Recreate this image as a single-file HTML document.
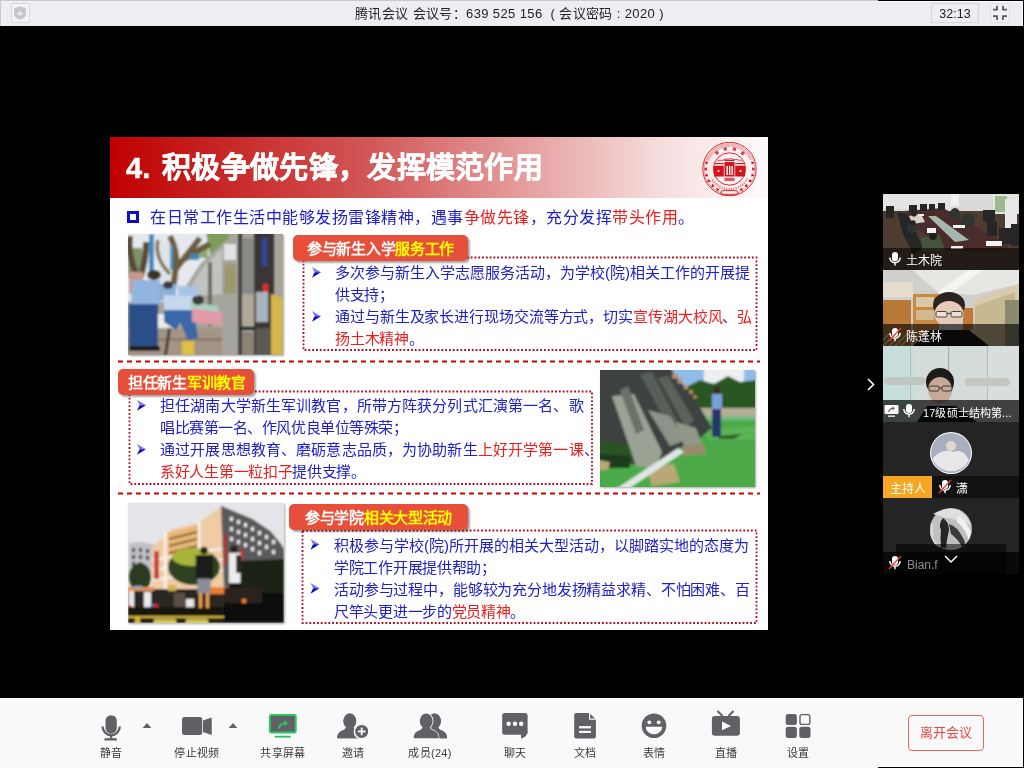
<!DOCTYPE html>
<html lang="zh-CN"><head><meta charset="utf-8">
<style>
*{margin:0;padding:0;box-sizing:border-box}
html,body{width:1024px;height:768px;overflow:hidden;background:#000}
body{font-family:"Liberation Sans",sans-serif;position:relative}
.a,.ln,.tool,.lbl{will-change:transform}
.a{position:absolute}
.tb{left:0;top:0;width:1024px;height:26px;background:#edeef2}
.ttl{left:0;top:1px;width:1024px;height:26px;line-height:26px;text-align:center;font-size:13px;letter-spacing:0.38px;color:#222}
.slide{left:110px;top:137px;width:658px;height:493px;background:#fff;overflow:hidden}
.hdr{left:0;top:0;width:658px;height:61px;background:linear-gradient(90deg,#c00000 0%,#d25858 40%,#e7a4a4 65%,#f6dede 84%,#fefafa 100%)}
.htxt{left:16px;top:11px;font-size:29px;font-weight:bold;-webkit-text-stroke:0.5px #fff;color:#fff;line-height:40px;white-space:nowrap}
.ln{position:absolute;white-space:nowrap;font-size:15px;line-height:22px;color:#2020cc}
.r{color:#f01c1c}
.lbl{position:absolute;background:#e84f3a;border-radius:5px;color:#fff;font-weight:bold;font-size:15px;letter-spacing:-0.3px;line-height:28px;white-space:nowrap;box-shadow:2px 2px 2px rgba(0,0,0,.35)}
.y{color:#ffff00}
.arr{position:absolute;font-size:13px;color:#0d0dc4}
.tool{position:absolute;top:0;font-size:11px;letter-spacing:0.3px;line-height:13px;color:#3a3a3a;text-align:center;white-space:nowrap}
</style></head><body>
<svg width="0" height="0" style="position:absolute"><defs><filter id="bl1" x="-5%" y="-5%" width="110%" height="110%"><feGaussianBlur stdDeviation="0.9"/></filter><filter id="bl2" x="-5%" y="-5%" width="110%" height="110%"><feGaussianBlur stdDeviation="1"/></filter></defs></svg>
<!-- title bar -->
<div class="a tb"></div>
<div class="a" style="left:0;top:0;width:878px;height:1px;background:#c9cacd"></div>
<div class="a" style="left:0;top:0;width:1px;height:26px;background:#c9cacd"></div>
<div class="a" style="left:878px;top:0;width:146px;height:1px;background:#000"></div>
<div class="a" style="left:878px;top:1px;width:145px;height:1px;background:#fff"></div>
<div class="a" style="left:1022px;top:1px;width:1px;height:25px;background:#fff"></div>
<div class="a" style="left:1023px;top:0;width:1px;height:26px;background:#000"></div>
<div class="a" style="left:11px;top:3px;width:19px;height:20px;border:1px solid #d9dadd;background:#f2f3f6;border-radius:1px"></div>
<svg class="a" style="left:11px;top:3px" width="19" height="20"><path d="M9,3.2 L14.9,5.3 L14.9,10.6 C14.9,13.9 12.4,15.8 9,16.6 C5.6,15.8 3.1,13.9 3.1,10.6 L3.1,5.3z" fill="#c6c7ca"/><rect x="6" y="9.9" width="6" height="1.5" fill="#eef0f2"/><rect x="8.25" y="8" width="1.5" height="5.2" fill="#eef0f2"/></svg>
<div class="a" style="left:931px;top:3px;width:48px;height:20px;border:1px solid #d6d7da;background:#eceef1;font-size:12.5px;line-height:20px;text-align:center;color:#222">32:13</div>
<div class="a" style="left:990px;top:3px;width:20px;height:20px;border:1px solid #dfe0e3;background:#eef0f3;border-radius:1px"></div>
<svg class="a" style="left:990px;top:0px" width="20" height="26" fill="none" stroke="#5a5c60" stroke-width="1.8"><path d="M7,5.8 V9.6 H3 M13,5.8 V9.6 H17 M3,16.2 H7 V20 M17,16.2 H13 V20"/></svg>
<div class="a ttl" style="text-align:left;left:355px;width:auto">腾讯会议 会议号：639 525 156 <span style="margin:0 4px 0 4px">(</span>会议密码<span style="margin:0 4px 0 4px">:</span>2020<span style="margin-left:4px">)</span></div>

<!-- slide -->
<div class="a slide">
  <div class="a hdr"></div>
  <div class="a htxt">4.<span style="margin-left:12px;letter-spacing:0.3px">积极争做先锋，发挥模范作用</span></div>
  <div class="a" style="left:17px;top:74px;width:12px;height:12px;border:3px solid #0c0cc8"></div>
  <div class="ln" style="left:40px;top:70px;font-size:16px;letter-spacing:0.5px">在日常工作生活中能够发扬雷锋精神，遇事<span class="r">争做先锋</span>，充分发挥<span class="r">带头作用</span>。</div>
  <svg class="a" style="left:0;top:0" width="658" height="493">
    <g stroke="#b0081c" stroke-width="1.8" stroke-dasharray="1.8 2" fill="none">
      <rect x="193.5" y="120.5" width="453" height="92.5"/>
      <rect x="19.5" y="254.5" width="462.5" height="92.5"/>
      <rect x="192.5" y="393.5" width="454" height="92.5"/>
    </g>
    <g stroke="#d00000" stroke-width="2" stroke-dasharray="5 4" fill="none">
      <line x1="8" y1="224.5" x2="650" y2="224.5"/>
      <line x1="8" y1="356.5" x2="650" y2="356.5"/>
    </g>
  </svg>
  <!-- arrows -->
  <svg class="a" style="left:0;top:0" width="658" height="493">
   <defs><g id="ar"><path d="M0,0 L9,5.2 L2.6,5.2z" fill="#7a7ae0"/><path d="M2.6,5.2 L9,5.2 L0,10.8z" fill="#0a0ac0"/></g></defs>
   <use href="#ar" x="202" y="130"/><use href="#ar" x="202" y="174"/>
   <use href="#ar" x="27" y="263"/><use href="#ar" x="27" y="307"/>
   <use href="#ar" x="200.5" y="402"/><use href="#ar" x="200.5" y="446"/>
  </svg>
  <!-- logo -->
  <svg class="a" style="left:592px;top:5px" width="56" height="56" viewBox="0 0 56 56">
   <g fill="none" stroke="#d2141e">
    <circle cx="27.5" cy="27" r="26.7" stroke-width="0.9"/>
    <circle cx="27.5" cy="27" r="25.2" stroke-width="0.5" opacity=".7"/>
    <path d="M5.90,18.27 A23.3,23.3 0 0 1 49.10,18.27" stroke-width="2.6" stroke-dasharray="0.6 0.6" opacity="0.5"/>
    <circle cx="27.5" cy="27" r="16.2" stroke-width="0.9"/>
    <path d="M45.34,36.48 A20.2,20.2 0 0 1 9.66,36.48" stroke-width="2.2" stroke-dasharray="1.1 1.3" opacity="0.6"/>
    <path d="M15.5,19 Q18,17.5 20.5,18.5 Q23,16.5 26,17.2 Q29,15.8 31.5,17.5 Q34,16.8 36.5,18.2 Q38.5,17.6 40,19" stroke-width="0.8"/>
   </g>
   <g fill="#d2141e">
    <polygon points="2.4,20.3 5.1,22.8 6.0,19.4"/><polygon points="52.6,20.3 49.0,19.4 49.9,22.8"/><polygon points="1.5,27.0 4.8,28.8 4.8,25.2"/><polygon points="53.5,27.0 50.2,25.2 50.2,28.8"/><polygon points="2.4,33.7 6.0,34.6 5.1,31.2"/><polygon points="52.6,33.7 49.9,31.2 49.0,34.6"/><polygon points="5.0,40.0 8.7,39.9 6.9,36.8"/><polygon points="50.0,40.0 48.1,36.8 46.3,39.9"/><polygon points="9.1,45.4 12.7,44.3 10.2,41.8"/><polygon points="45.9,45.4 44.8,41.8 42.3,44.3"/><polygon points="14.5,49.5 17.7,47.6 14.6,45.8"/><polygon points="40.5,49.5 40.4,45.8 37.3,47.6"/>
    <rect x="13.3" y="9.2" width="3.2" height="3.2" transform="rotate(-38 14.9 10.8)" opacity=".8"/><rect x="21.6" y="5.3" width="3.2" height="3.2" transform="rotate(-12 23.2 6.9)" opacity=".8"/><rect x="30.9" y="5.5" width="3.2" height="3.2" transform="rotate(14 32.5 7.1)" opacity=".8"/><rect x="39.1" y="9.7" width="3.2" height="3.2" transform="rotate(40 40.7 11.3)" opacity=".8"/>
    <rect x="12" y="23.5" width="9.8" height="11"/><rect x="33.2" y="23.5" width="9.8" height="11"/>
    <rect x="22.5" y="20" width="10" height="14.5"/>
    <rect x="12" y="21" width="9.8" height="1.2"/><rect x="33.2" y="21" width="9.8" height="1.2"/><rect x="22.5" y="17.8" width="10" height="1.2"/>
    <rect x="22.5" y="35.8" width="10" height="3.2" opacity=".7"/>
    <rect x="19" y="48.6" width="17" height="4.2" rx="2" fill="none" stroke="#d2141e" stroke-width="0.9"/>
   </g>
   <g fill="#fff"><rect x="24.5" y="24" width="1.4" height="9"/><rect x="27" y="24" width="1.4" height="9"/><rect x="29.5" y="24" width="1.4" height="9"/><circle cx="16.5" cy="29" r="1"/><circle cx="38.5" cy="29" r="1"/><rect x="12" y="22.6" width="9.8" height="0.8" opacity=".8"/><rect x="33.2" y="22.6" width="9.8" height="0.8" opacity=".8"/><rect x="22.5" y="19.2" width="10" height="0.8" opacity=".8"/></g>
  </svg>
  <!-- photo1 -->
  <svg class="a" style="left:18px;top:97px;filter:drop-shadow(1px 1px 1px rgba(0,0,0,.35))" width="155" height="121" viewBox="0 0 155 121">
   <rect width="155" height="121" fill="#a8a49a"/>
   <g filter="url(#bl1)">
   <rect x="-2" y="-2" width="104" height="70" fill="#e6eaee"/>
   <rect x="30" y="8" width="22" height="40" fill="#dfe4ea"/>
   <rect x="0" y="14" width="14" height="30" fill="#7a9468"/>
   <polygon points="78,-2 102,-2 100,20 82,22" fill="#7e9c5c"/>
   <rect x="66" y="14" width="14" height="10" fill="#90a870"/>
   <path d="M2,2 Q0,20 6,34 L10,46 M12,44 Q18,28 18,8" stroke="#5a4636" stroke-width="6" fill="none"/>
   <path d="M44,62 Q47,42 48,30 Q49,16 42,2 M47,36 Q58,22 72,4 M49,30 Q66,18 82,10" stroke="#6a5c3e" stroke-width="6" fill="none"/>
   <path d="M30,6 Q26,24 42,40" stroke="#7a7048" stroke-width="3.5" fill="none"/>
   <rect x="21" y="0" width="5" height="38" fill="#3a8ac0"/>
   <rect x="42" y="12" width="3" height="24" fill="#4a92c0"/>
   <rect x="62" y="20" width="9" height="6" fill="#3a88b8"/>
   <polygon points="58,52 72,30 96,8 110,-2 110,121 92,121 90,92 62,92" fill="#a6a69e"/>
   <polygon points="64,50 76,32 94,14 94,60 66,62" fill="#c0c4c0"/>
   <rect x="96" y="10" width="12" height="16" fill="#e0e4e4"/>
   <rect x="96" y="30" width="12" height="30" fill="#9c9870"/>
   <rect x="80" y="28" width="4" height="64" fill="#6a6a64"/>
   <rect x="113" y="4" width="13" height="56" fill="#8a8a84"/>
   <rect x="110" y="-2" width="4" height="123" fill="#3e3e3a"/>
   <rect x="126" y="-2" width="20" height="123" fill="#3a3434"/>
   <rect x="134" y="4" width="5" height="28" fill="#2a4a9a"/>
   <rect x="135" y="50" width="5" height="12" fill="#d83030"/>
   <rect x="128" y="58" width="12" height="30" fill="#a8b4bc"/>
   <rect x="114" y="60" width="12" height="30" fill="#b0a898"/>
   <rect x="112" y="93" width="26" height="3" fill="#2a2a2a"/>
   <rect x="114" y="98" width="12" height="23" fill="#8a8478"/>
   <polygon points="143,60 155,64 155,121 143,121" fill="#d6b64e"/>
   <rect x="128" y="94" width="14" height="27" fill="#5a5a52"/>
   <rect x="0" y="94" width="94" height="27" fill="#a49484"/>
   <rect x="0" y="104" width="94" height="3" fill="#8a7c70"/>
   <polygon points="36,121 40,94 43,94 39,121" fill="#3a3a38"/>
   <rect x="54" y="107" width="12" height="14" fill="#e0c040"/>
   <rect x="27" y="80" width="20" height="14" fill="#ececec"/>
   <rect x="1" y="38" width="14" height="22" fill="#c89890"/>
   <ellipse cx="26" cy="41" rx="7" ry="5" fill="#3a3028"/>
   <polygon points="4,46 32,46 34,70 3,70" fill="#92b4e0"/>
   <polygon points="1,70 30,70 30,112 20,116 1,114" fill="#2a5088"/>
   <rect x="1" y="112" width="31" height="5" fill="#1a1a1a"/>
   <polygon points="30,50 48,50 48,68 32,66" fill="#8ab0d8"/>
   <ellipse cx="40" cy="51" rx="5" ry="4" fill="#3a3a3a"/>
   <polygon points="36,61 68,62 68,78 36,76" fill="#c6d8ee"/>
   <polygon points="36,76 66,76 70,104 60,106 52,88 48,96 36,88" fill="#3a68a8"/>
   <polygon points="64,72 94,78 94,92 64,88" fill="#e29aa8"/>
   <polygon points="62,68 90,72 90,78 62,74" fill="#a8d0c0"/>
   <ellipse cx="70" cy="66" rx="6" ry="5" fill="#3a3a3a"/>
   <rect x="50" y="52" width="20" height="10" fill="#a8c4e4"/>
   </g>
  </svg>
  <!-- photo2 -->
  <svg class="a" style="left:490px;top:233px;filter:drop-shadow(1px 1px 1px rgba(0,0,0,.35))" width="155" height="117" viewBox="0 0 155 117">
   <rect width="155" height="117" fill="#489a40"/>
   <g filter="url(#bl1)">
   <rect x="60" y="-2" width="97" height="20" fill="#90bce8"/>
   <rect x="104" y="-2" width="40" height="15" fill="#eef0f0"/>
   <polygon points="88,16 100,10 114,14 128,6 140,12 157,10 157,42 88,42" fill="#2a5624"/>
   <rect x="98" y="38" width="59" height="12" fill="#b4ae94"/>
   <rect x="100" y="46" width="57" height="5" fill="#78b888"/>
   <polygon points="0,50 157,50 157,119 0,119" fill="#4caa46"/>
   <polygon points="100,60 157,56 157,70 110,70" fill="#5ab452"/>
   <polygon points="-2,-2 70,-2 76,6 84,16 96,30 106,48 112,58 100,68 80,78 56,96 30,94 -2,90" fill="#3c423f"/>
   <polygon points="-2,70 24,74 40,82 26,96 -2,96" fill="#2a5226"/>
   <polygon points="-2,84 30,86 30,98 -2,98" fill="#1e3a1c"/>
   <polygon points="12,26 34,24 62,82 56,98 36,96" fill="#9aa294"/>
   <polygon points="20,20 28,16 44,60 36,64" fill="#6a7268"/>
   <polygon points="40,4 52,2 80,56 72,64" fill="#585e58"/>
   <polygon points="58,8 68,6 94,50 86,58" fill="#5a625a"/>
   <polygon points="48,40 70,46 86,70 70,76" fill="#8a9488"/>
   <polygon points="76,52 96,58 102,74 84,76" fill="#909888"/>
   <g fill="#c09070"><circle cx="75" cy="6" r="3"/><circle cx="80" cy="11" r="2.6"/><circle cx="86" cy="17" r="2.3"/><circle cx="91" cy="22" r="2"/><circle cx="95" cy="27" r="1.8"/></g>
   <polygon points="46,96 74,94 80,112 52,116" fill="#b8a878"/>
   <polygon points="82,76 104,74 106,84 84,86" fill="#9a8a6a"/>
   <polygon points="-2,90 10,92 8,100 -2,100" fill="#b8a878"/>
   <polygon points="16,119 78,78 84,82 28,119" fill="#dfe6e6"/>
   <rect x="112" y="24" width="10" height="15" fill="#7aa0d8"/>
   <circle cx="117" cy="20" r="3.5" fill="#3a2a20"/>
   <rect x="112" y="39" width="9" height="28" fill="#26346a"/>
   <polygon points="120,66 142,64 134,69 118,69" fill="#2a5a28"/>
   </g>
  </svg>
  <!-- photo3 -->
  <svg class="a" style="left:18px;top:366px;filter:drop-shadow(1px 1px 1px rgba(0,0,0,.35))" width="156" height="120" viewBox="0 0 156 120">
   <rect width="156" height="120" fill="#e4e5e8"/>
   <g filter="url(#bl1)">
   <polygon points="1,40 14,39 27,42 27,70 1,70" fill="#c0c0c4"/>
   <g fill="#3a3a3c"><rect x="4" y="45" width="3" height="4"/><rect x="11" y="45" width="3" height="4"/><rect x="18" y="46" width="3" height="4"/><rect x="4" y="52" width="3" height="4"/><rect x="11" y="52" width="3" height="4"/><rect x="18" y="53" width="3" height="4"/><rect x="4" y="59" width="3" height="4"/><rect x="11" y="59" width="3" height="4"/></g>
   <rect x="6" y="63" width="6" height="3" fill="#c04040"/>
   <polygon points="23.7,86 23.7,44.8 43,27 69.4,20 94,3.5 97.5,7.9 97.5,86" fill="#f0cca6"/>
   <polygon points="40,30 70,22 70,50 40,56" fill="#e8b878"/>
   <g fill="#f8f4ee"><polygon points="24,56 97,44 97,46 24,58"/><polygon points="24,66 97,55 97,57 24,68"/><polygon points="24,76 97,66 97,68 24,78"/><rect x="36" y="28" width="2.5" height="58"/><rect x="70" y="18" width="2.5" height="68"/></g>
   <g fill="#7a5a30"><polygon points="41,35 69,28 69,30 41,37"/><polygon points="41,42 69,35 69,37 41,44"/><polygon points="41,49 69,42 69,44 41,51"/></g>
   <rect x="26" y="48" width="5" height="28" fill="#c84030"/>
   <polygon points="93,3 100,6 124,16 142,28 152,40 156,46 156,86 96,86" fill="#5a5a5c"/>
   <g fill="#e8e8ea"><rect x="102" y="14" width="3" height="4"/><rect x="109" y="17" width="3" height="4"/><rect x="116" y="20" width="3" height="4"/><rect x="123" y="24" width="3" height="4"/><rect x="130" y="28" width="3" height="4"/><rect x="137" y="32" width="3" height="4"/><rect x="144" y="37" width="3" height="4"/><rect x="102" y="24" width="3" height="4"/><rect x="109" y="27" width="3" height="4"/><rect x="116" y="30" width="3" height="4"/><rect x="123" y="34" width="3" height="4"/><rect x="130" y="38" width="3" height="4"/><rect x="137" y="42" width="3" height="4"/><rect x="144" y="47" width="3" height="4"/><rect x="102" y="34" width="3" height="4"/><rect x="109" y="37" width="3" height="4"/><rect x="116" y="40" width="3" height="4"/><rect x="123" y="44" width="3" height="4"/><rect x="130" y="48" width="3" height="4"/></g>
   <g fill="#b03030"><rect x="96" y="32" width="3" height="30"/><rect x="112" y="45" width="3" height="12"/></g>
   <polygon points="108,58 156,56 156,92 108,92" fill="#1e2418"/>
   <ellipse cx="66" cy="64" rx="26" ry="18" fill="#2e4220"/>
   <ellipse cx="64" cy="54" rx="20" ry="9" fill="#a8b43a"/>
   <ellipse cx="12" cy="74" rx="11" ry="14" fill="#2a3a20"/>
   <rect x="0" y="86" width="98" height="20" fill="#2a2620"/>
   <rect x="0" y="84" width="26" height="4" fill="#e09050"/>
   <rect x="80" y="84" width="18" height="7" fill="#e88030"/>
   <rect x="40" y="82" width="8" height="6" fill="#d0b050"/>
   <rect x="1" y="88" width="5" height="16" fill="#eaeaea"/><rect x="16" y="89" width="7" height="15" fill="#eaeaea"/>
   <rect x="6" y="83" width="8" height="2.5" fill="#90a8c8"/>
   <circle cx="2" cy="105" r="2.5" fill="#d03030"/><circle cx="25" cy="103" r="2.5" fill="#3070c0"/><circle cx="28" cy="104" r="3" fill="#d03030"/>
   <rect x="46" y="90" width="11" height="14" fill="#5a5048"/>
   <rect x="58" y="96" width="8" height="10" fill="#e8e8e8"/>
   <rect x="0" y="104" width="96" height="9" fill="#141210"/>
   <rect x="0" y="113" width="96" height="1.8" fill="#d0b030"/>
   <rect x="0" y="115" width="96" height="5" fill="#201c10"/>
   <rect x="7" y="115" width="5" height="5" fill="#d0b030"/>
   <rect x="26" y="116" width="22" height="4" fill="#d0c050"/><rect x="58" y="116" width="22" height="4" fill="#d0c050"/>
   <rect x="67.7" y="52" width="17" height="24" fill="#1a1a1a"/>
   <circle cx="76" cy="47.5" r="3.8" fill="#2a2018"/>
   <rect x="69.4" y="75.6" width="13.2" height="15" fill="#8c8c98"/>
   <rect x="71" y="90" width="3" height="15" fill="#eaa050"/><rect x="78" y="90" width="3" height="15" fill="#eaa050"/>
   <rect x="101" y="50" width="11.5" height="30" fill="#ececea"/>
   <rect x="108" y="52" width="5" height="18" fill="#2a2a2a"/>
   <circle cx="106" cy="46" r="3.8" fill="#2a2018"/>
   <rect x="101" y="80" width="11" height="8" fill="#141414"/>
   <rect x="96" y="85" width="38" height="35" fill="#2a241e"/>
   <rect x="134" y="90" width="22" height="30" fill="#100c0a"/>
   <rect x="96" y="100" width="60" height="20" fill="#0e0a08"/>
   <rect x="114" y="96" width="4" height="4" fill="#f08020"/>
   </g>
  </svg>
  <div class="lbl" style="left:183px;top:98px;width:175px;height:26px;padding-left:14px">参与新生入学<span class="y">服务工作</span></div>
  <div class="lbl" style="left:8px;top:232px;width:136px;height:26px;padding-left:10px">担任新生<span class="y">军训教官</span></div>
  <div class="lbl" style="left:179px;top:367px;width:179px;height:26px;padding-left:16px">参与学院<span class="y">相关大型活动</span></div>

  <div class="ln" style="left:225px;top:125px;letter-spacing:0.0px">多次参与新生入学志愿服务活动，为学校(院)相关工作的开展提</div>
  <div class="ln" style="left:225px;top:147px;letter-spacing:-0.3px">供支持；</div>
  <div class="ln" style="left:225px;top:169px;letter-spacing:-0.1px">通过与新生及家长进行现场交流等方式，切实<span class="r">宣传湖大校风</span>、<span class="r">弘</span></div>
  <div class="ln" style="left:225px;top:191px;letter-spacing:-0.2px"><span class="r">扬土木精神</span>。</div>

  <div class="ln" style="left:50px;letter-spacing:0.13px;top:258px">担任湖南大学新生军训教官，所带方阵获分列式汇演第一名、歌</div>
  <div class="ln" style="left:50px;letter-spacing:-0.45px;top:280px">唱比赛第一名、作风优良单位等殊荣；</div>
  <div class="ln" style="left:50px;letter-spacing:0.13px;top:302px">通过开展思想教育、磨砺意志品质，为协助新生<span class="r">上好开学第一课</span>、</div>
  <div class="ln" style="left:50px;letter-spacing:-0.3px;top:324px"><span class="r">系好人生第一粒扣子</span>提供支撑。</div>

  <div class="ln" style="left:224px;top:398px">积极参与学校(院)所开展的相关大型活动，以脚踏实地的态度为</div>
  <div class="ln" style="left:224px;top:420px;letter-spacing:-0.3px">学院工作开展提供帮助；</div>
  <div class="ln" style="left:224px;top:442px;letter-spacing:-0.15px">活动参与过程中，能够较为充分地发扬精益求精、不怕困难、百</div>
  <div class="ln" style="left:224px;top:464px;letter-spacing:-0.3px">尺竿头更进一步的<span class="r">党员精神</span>。</div>
</div>

<!-- sidebar -->
<div class="a" style="left:865.5px;top:377.5px;width:10px;height:14px"><svg width="10" height="14"><path d="M2,1 L7.5,6.5 L2,12" fill="none" stroke="#fff" stroke-width="1.6"/></svg></div>
<svg class="a" style="left:883px;top:194px" width="136" height="380">
 <!-- tile1 conference room -->
 <g>
  <rect x="0" y="0" width="136" height="76" fill="#4e3c30"/>
  <rect x="0" y="0" width="136" height="17" fill="#d9d9d7"/>
  <rect x="0" y="0" width="68" height="15" fill="#e4e4e2"/>
  <rect x="68" y="0" width="8" height="12" fill="#f0f0f0"/>
  <rect x="110" y="0" width="26" height="20" fill="#e0e6dc"/>
  <rect x="112" y="2" width="12" height="16" fill="#a0b890"/>
  <rect x="122" y="5" width="12" height="30" fill="#e8e8e8"/>
  <polygon points="22,17 60,14 126,52 120,57 62,57 34,34" fill="#4a2c2a"/>
  <polygon points="45,22 53,22 86,46 72,48" fill="#a6b6ae"/>
  <g fill="#262626">
   <rect x="3" y="12" width="8" height="12"/><rect x="26" y="11" width="8" height="7"/><rect x="37" y="10" width="7" height="7"/><rect x="46" y="10" width="6" height="6"/><rect x="55" y="9" width="7" height="7"/>
   <rect x="100" y="16" width="12" height="12"/><rect x="104" y="28" width="10" height="14"/><rect x="116" y="34" width="14" height="16"/><rect x="128" y="30" width="8" height="22"/>
   <polygon points="14,18 24,20 34,40 40,54 30,60 20,40"/>
  </g>
  <g fill="#2f3530">
   <ellipse cx="30" cy="34" rx="6" ry="5"/><ellipse cx="85" cy="26" rx="7" ry="7"/><ellipse cx="72" cy="20" rx="5" ry="6"/>
  </g>
  <polygon points="26,22 38,20 42,28 30,30" fill="#d8d4cc"/>
  <circle cx="31" cy="20" r="2.6" fill="#2a2420"/>
  <polygon points="38,44 56,40 62,56 40,58" fill="#46543e"/>
  <circle cx="50" cy="42" r="4" fill="#221c18"/>
  <circle cx="30" cy="29" r="2.8" fill="#2a2420"/>
  <g fill="#f2f2f2"><rect x="35" y="20" width="6" height="2"/><rect x="44" y="34" width="9" height="5"/><rect x="70" y="31" width="12" height="3"/><rect x="103" y="47" width="16" height="5"/><rect x="68" y="52" width="12" height="3"/></g>
  <rect x="0" y="54" width="136" height="22" fill="rgba(0,0,0,0.55)"/>
 </g>
 <!-- tile2 -->
 <g transform="translate(0,76)">
  <rect x="0" y="0" width="136" height="76" fill="#cfcfcb"/>
  <polygon points="30,0 136,0 136,14 90,25 55,22 40,10" fill="#e6e6e2"/>
  <polygon points="55,22 85,0 100,0 60,28" fill="#f4f4f2"/>
  <rect x="0" y="12" width="30" height="15" fill="#e4ddd0"/>
  <rect x="0" y="30" width="28" height="46" fill="#b87838"/>
  <rect x="30" y="24" width="26" height="52" fill="#c88a40"/>
  <rect x="33" y="27" width="18" height="10" fill="#d8c8a8"/>
  <rect x="33" y="40" width="18" height="10" fill="#d0b890"/>
  <rect x="80" y="38" width="10" height="22" fill="#c07a38"/>
  <polygon points="90,30 136,14 136,76 90,76" fill="#d8ccb0"/>
  <polygon points="92,36 132,22 132,76 92,76" fill="#c8b890"/>
  <rect x="122" y="30" width="14" height="46" fill="#8a8a70"/>
  <ellipse cx="66" cy="35" rx="16" ry="13" fill="#2a2420"/>
  <ellipse cx="66" cy="44" rx="14.5" ry="13" fill="#e6cabc"/>
  <g fill="none" stroke="#3a3230" stroke-width="0.9"><rect x="53" y="41.5" width="11" height="5.5" rx="1.5" fill="#ece2de"/><rect x="68" y="41.5" width="11" height="5.5" rx="1.5" fill="#e6dcd8"/><path d="M64,43.5 h4"/></g>
  <polygon points="30,76 46,60 86,60 106,76" fill="#1a1a1a"/>
  <rect x="0" y="54" width="136" height="22" fill="rgba(0,0,0,0.62)"/>
  <g stroke="#6a6a6a" stroke-width="1.2" opacity=".6"><path d="M0,70 L6,64 M0,76 L12,64 M6,76 L18,64 M12,76 L24,64 M18,76 L28,66"/></g>
 </g>
 <!-- tile3 -->
 <g transform="translate(0,152)">
  <rect x="0" y="0" width="136" height="76" fill="#d4dcda"/>
  <rect x="0" y="0" width="30" height="76" fill="#c6dedc"/>
  <rect x="104" y="0" width="32" height="76" fill="#d8dedc"/>
  <rect x="65" y="0" width="1.2" height="54" fill="#a8aeae"/>
  <rect x="104" y="0" width="1" height="54" fill="#b4baba"/>
  <rect x="27" y="0" width="1" height="54" fill="#b4baba"/>
  <rect x="1" y="31" width="42" height="8" rx="4" fill="#c2c6c0"/>
  <rect x="82" y="32" width="45" height="8" rx="4" fill="#c4c6c0"/>
  <ellipse cx="57" cy="36" rx="14" ry="14" fill="#1e1a18"/>
  <ellipse cx="57" cy="44" rx="12" ry="13" fill="#c8a898"/>
  <g fill="none" stroke="#2a2624" stroke-width="0.9"><rect x="46" y="40" width="10" height="5" rx="1.5"/><rect x="59" y="40" width="10" height="5" rx="1.5"/><path d="M56,42 h3"/></g>
  <polygon points="34,76 44,60 72,60 94,76" fill="#121418"/>
  <rect x="0" y="54" width="136" height="22" fill="rgba(0,0,0,0.7)"/>
 </g>
 <!-- tile4 -->
 <g transform="translate(0,228)">
  <rect x="0" y="0" width="136" height="76" fill="#242424"/>
  <circle cx="68" cy="31" r="21" fill="#fff"/>
  <circle cx="68" cy="31" r="20" fill="#a8b0c0"/>
  <path d="M50,36 Q60,26 70,30 Q80,26 86,38 A20,20 0 0 1 50,38z" fill="#e8e8ea"/>
  <circle cx="68" cy="24" r="5" fill="#e0d8d0"/>
  <rect x="0" y="54" width="136" height="22" fill="#111"/>
  <rect x="0" y="54" width="49" height="22" fill="#f5a623"/>
 </g>
 <!-- tile5 -->
 <g transform="translate(0,304)">
  <rect x="0" y="0" width="136" height="76" fill="#242424"/>
  <circle cx="68" cy="31" r="21" fill="#c0c0c0"/>
  <path d="M50,16 Q60,10 72,11 Q84,14 88,28 Q82,22 76,24 Q70,20 64,20z" fill="#e0e0e0"/>
  <path d="M48,24 Q52,30 50,40 Q54,46 58,50 Q50,48 47,36z" fill="#d8d8d8"/>
  <path d="M60,20 Q66,24 66,32 Q64,40 63,50 L58,49 Q57,40 58,32 Q55,26 60,20z" fill="#262626"/>
  <path d="M66,26 Q74,28 80,40 Q84,46 80,50 Q74,40 68,36z" fill="#3a3a3a"/>
  <path d="M76,18 Q84,24 88,34 L86,42 Q82,30 74,24z" fill="#f2f2f2"/>
  <rect x="0" y="54" width="136" height="22" fill="#0a0a0a"/>
  <rect x="13" y="46" width="110" height="30" fill="rgba(0,0,0,0.55)"/>
  <path d="M62,58 L68,64 L74,58" fill="none" stroke="#fff" stroke-width="1.5"/>
 </g>
 <!-- icons -->
 <g fill="#fff">
  <rect x="9" y="58" width="6" height="9.5" rx="3"/>
  <path d="M6.8,63.5 a5.2,5.2 0 0 0 10.4,0" fill="none" stroke="#fff" stroke-width="1.5"/>
  <rect x="11.3" y="68.5" width="1.4" height="3.2"/>
 </g>
 <g transform="translate(0,76)">
  <rect x="9" y="58" width="6" height="9" rx="3" fill="#fff"/>
  <path d="M6.8,63 a5.2,5.2 0 0 0 10.4,0" fill="none" stroke="#fff" stroke-width="1.5"/>
  <rect x="11.3" y="68" width="1.4" height="3.2" fill="#fff"/>
  <line x1="6" y1="71" x2="18" y2="58" stroke="#e8402a" stroke-width="1.3"/>
 </g>
 <g transform="translate(0,152)">
  <rect x="1.5" y="59" width="14" height="9" rx="1.2" fill="#fff"/>
  <rect x="5" y="69.5" width="7" height="1.3" fill="#fff"/>
  <path d="M5.5,66 Q6.5,62.5 10,62.3" fill="none" stroke="#555" stroke-width="1.1"/>
  <polygon points="9.5,60.5 12,62.3 9.5,64.2" fill="#555"/>
  <g transform="translate(14,0)">
   <rect x="9" y="58" width="6" height="9" rx="3" fill="#fff"/>
   <path d="M6.8,63 a5.2,5.2 0 0 0 10.4,0" fill="none" stroke="#fff" stroke-width="1.5"/>
   <rect x="11.3" y="68" width="1.4" height="3.2" fill="#fff"/>
  </g>
 </g>
 <g transform="translate(50,228)">
  <rect x="9" y="58" width="6" height="9" rx="3" fill="#fff"/>
  <path d="M6.8,63 a5.2,5.2 0 0 0 10.4,0" fill="none" stroke="#fff" stroke-width="1.5"/>
  <rect x="11.3" y="68" width="1.4" height="3.2" fill="#fff"/>
  <line x1="6" y1="71" x2="18" y2="58" stroke="#e8402a" stroke-width="1.3"/>
 </g>
 <g transform="translate(0,304)">
  <rect x="9" y="58" width="6" height="9" rx="3" fill="#fff"/>
  <path d="M6.8,63 a5.2,5.2 0 0 0 10.4,0" fill="none" stroke="#fff" stroke-width="1.5"/>
  <rect x="11.3" y="68" width="1.4" height="3.2" fill="#fff"/>
  <line x1="6" y1="71" x2="18" y2="58" stroke="#e8402a" stroke-width="1.3"/>
 </g>
</svg>
<div class="a" style="left:906px;top:254px;font-size:12px;line-height:14px;color:#fff;white-space:nowrap">土木院</div>
<div class="a" style="left:906px;top:330px;font-size:12px;line-height:14px;color:#fff;white-space:nowrap">陈蓬林</div>
<div class="a" style="left:923px;top:406px;font-size:11px;letter-spacing:0.1px;line-height:14px;color:#fff;white-space:nowrap">17级硕士结构第...</div>
<div class="a" style="left:890px;top:482px;font-size:12px;line-height:14px;color:#fff;white-space:nowrap">主持人</div>
<div class="a" style="left:956px;top:482px;font-size:12px;line-height:14px;color:#fff;white-space:nowrap">潇</div>
<div class="a" style="left:907px;top:558px;font-size:12px;line-height:14px;color:#8c8c8c;white-space:nowrap">Bian.f</div>

<!-- toolbar -->
<div class="a" style="left:0;top:698px;width:1024px;height:70px;background:#f9f9f9"></div>
<div class="a" style="left:0;top:698px;width:1023px;height:1px;background:#fff"></div>
<div class="a" style="left:1022px;top:698px;width:1px;height:69px;background:#fff"></div>
<div class="a" style="left:1023px;top:698px;width:1px;height:70px;background:#000"></div>
<div class="a" style="left:878px;top:766px;width:145px;height:1px;background:#fff"></div>
<div class="a" style="left:878px;top:767px;width:146px;height:1px;background:#000"></div>
<svg class="a" style="left:0;top:698px" width="1024" height="70">
 <g fill="#5f6166">
  <!-- mic -->
  <rect x="105.5" y="17.2" width="11.3" height="18.5" rx="5.65"/>
  <path d="M102.6,28.5 a8.6,8.6 0 0 0 17.2,0" fill="none" stroke="#5f6166" stroke-width="2.3"/>
  <rect x="110" y="37" width="2.3" height="3.5"/>
  <rect x="104.5" y="40.2" width="12.3" height="2.3"/>
  <polygon points="142.6,30 151.4,30 147,25"/>
  <!-- video -->
  <rect x="182" y="19" width="20.2" height="18" rx="2.5"/>
  <polygon points="203,22.4 211.7,19.5 211.7,37 203,34"/>
  <polygon points="228.6,30 237.4,30 233,25"/>
  <!-- share -->
  <rect x="269.9" y="17" width="25.8" height="17.6" rx="1.5" stroke="#2bc566" stroke-width="2"/>
  <rect x="274.7" y="37.8" width="16.1" height="1.8" fill="#2bc566"/>
  <path d="M278.5,30.5 C279.5,27.5 281.5,25.5 285,25.3" fill="none" stroke="#2bc566" stroke-width="2"/>
  <polygon points="284,22.3 288.3,25.3 284,28.3" fill="#2bc566"/>
  <!-- invite -->
  <g><ellipse cx="349.8" cy="23" rx="6.4" ry="7.6"/><path d="M337.3,40.2 C337.3,35.5 339.8,33.5 344.8,31.6 L346.3,29 L353.3,29 L354.8,31.6 C359.8,33.5 362.3,35.5 362.3,40.2 Z"/></g><g><ellipse cx="349.8" cy="23" rx="6.4" ry="7.6"/><path d="M337.3,40.2 C337.3,35.5 339.8,33.5 344.8,31.6 L346.3,29 L353.3,29 L354.8,31.6 C359.8,33.5 362.3,35.5 362.3,40.2 Z"/></g>
  <circle cx="361.7" cy="33.4" r="7.3" stroke="#f9f9f9" stroke-width="1.6"/>
  <rect x="357.9" y="32.5" width="7.6" height="1.9" fill="#f9f9f9"/>
  <rect x="360.75" y="29.6" width="1.9" height="7.6" fill="#f9f9f9"/>
  <!-- members -->
  <g><ellipse cx="434.5" cy="23" rx="6.4" ry="7.6"/><path d="M422.0,40.2 C422.0,35.5 424.5,33.5 429.5,31.6 L431.0,29 L438.0,29 L439.5,31.6 C444.5,33.5 447.0,35.5 447.0,40.2 Z"/></g><g><ellipse cx="434.5" cy="23" rx="6.4" ry="7.6"/><path d="M422.0,40.2 C422.0,35.5 424.5,33.5 429.5,31.6 L431.0,29 L438.0,29 L439.5,31.6 C444.5,33.5 447.0,35.5 447.0,40.2 Z"/></g><g stroke="#f9f9f9" stroke-width="1.6"><ellipse cx="426.2" cy="23" rx="6.4" ry="7.6"/><path d="M413.7,40.2 C413.7,35.5 416.2,33.5 421.2,31.6 L422.7,29 L429.7,29 L431.2,31.6 C436.2,33.5 438.7,35.5 438.7,40.2 Z"/></g><g><ellipse cx="426.2" cy="23" rx="6.4" ry="7.6"/><path d="M413.7,40.2 C413.7,35.5 416.2,33.5 421.2,31.6 L422.7,29 L429.7,29 L431.2,31.6 C436.2,33.5 438.7,35.5 438.7,40.2 Z"/></g>
  <!-- chat -->
  <rect x="502.2" y="15.1" width="25.4" height="21.7" rx="2.5"/>
  <path d="M521,35 V40.6 Q527.6,39 527.6,32 V35z"/>
  <!-- doc -->
  <path d="M576.2,14.9 H589 V21.7 H595.9 V38.5 Q595.9,40.5 593.9,40.5 H576.2 Q574.2,40.5 574.2,38.5 V16.9 Q574.2,14.9 576.2,14.9 Z"/>
  <path d="M590.1,15.75 L595,20.6 L590.1,20.6 Z"/>
  <!-- emoji -->
  <circle cx="654" cy="27.7" r="12.3"/>
  <!-- tv -->
  <rect x="711.9" y="18" width="28" height="19.8" rx="3"/>
  <path d="M717.5,13 L722.5,18 M733.5,13 L728.5,18" stroke="#5f6166" stroke-width="2"/>
  <!-- settings -->
  <rect x="785.7" y="15.9" width="11.2" height="11.2" rx="2.5"/>
  <rect x="800" y="16.6" width="9.8" height="9.8" rx="2" fill="none" stroke="#5f6166" stroke-width="1.4"/>
  <rect x="785.7" y="28.7" width="11.2" height="11.2" rx="2.5"/>
  <rect x="799.3" y="28.7" width="11.2" height="11.2" rx="2.5"/>
 </g>
 <g fill="#fff">
  <circle cx="508.6" cy="25.7" r="2.2"/><circle cx="515" cy="25.7" r="2.2"/><circle cx="521.2" cy="25.7" r="2.2"/>
  <rect x="579" y="28.1" width="12" height="2.3"/><rect x="579" y="32.8" width="12" height="2.2"/>
  <circle cx="649.3" cy="24.3" r="1.9"/><circle cx="658.7" cy="24.3" r="1.9"/>
  <path d="M645.7,28.8 h16.6 a8.3,7.5 0 0 1 -16.6,0z"/>
  <polygon points="722,23.4 731,28 722,32.3"/>
 </g>
</svg>
<div class="tool" style="left:71px;top:746.5px;width:80px">静音</div>
<div class="tool" style="left:157px;top:746.5px;width:80px">停止视频</div>
<div class="tool" style="left:243px;top:746.5px;width:80px">共享屏幕</div>
<div class="tool" style="left:313px;top:746.5px;width:80px">邀请</div>
<div class="tool" style="left:390px;top:746.5px;width:80px">成员(24)</div>
<div class="tool" style="left:475px;top:746.5px;width:80px">聊天</div>
<div class="tool" style="left:545px;top:746.5px;width:80px">文档</div>
<div class="tool" style="left:614px;top:746.5px;width:80px">表情</div>
<div class="tool" style="left:686px;top:746.5px;width:80px">直播</div>
<div class="tool" style="left:758px;top:746.5px;width:80px">设置</div>
<div class="a" style="left:908px;top:715px;width:76px;height:36px;border:1px solid #f26464;border-radius:4px;color:#e84545;font-size:13px;line-height:34px;text-align:center">离开会议</div>
</body></html>
